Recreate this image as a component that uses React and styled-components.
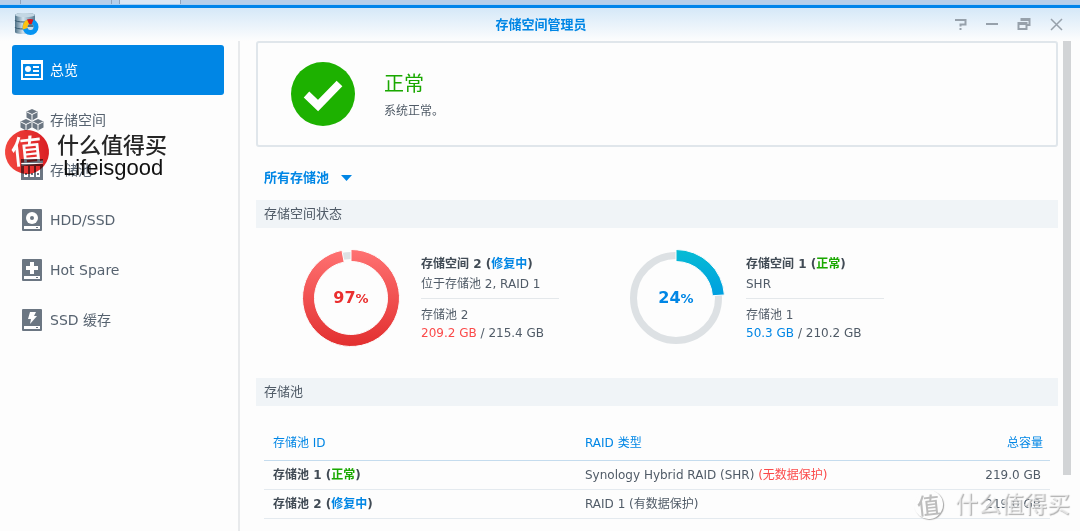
import React from "react";
import styled, { createGlobalStyle } from "styled-components";

const GlobalStyle = createGlobalStyle`
  * { box-sizing: border-box; }
  body {
    margin: 0;
    background: #fdfdfd;
    color: #505b67;
    font-family: "DejaVu Sans", "Noto Sans CJK SC", sans-serif;
    font-size: 12px;
    line-height: 18px;
  }
  button, select { font: inherit; color: inherit; }
`;

const tones = { ok: "#1aa800", busy: "#0086e5", danger: "#fb4a4a" };

const Page = styled.div`
  position: relative;
  display: flex;
  flex-direction: column;
  min-height: 100vh;
  overflow: hidden;
`;

const DesktopStrip = styled.div`
  display: flex;
  gap: 1px;
  height: 5px;
  background: #8fa3bd;
  border-bottom: 1px solid #a9cdf0;
`;

const DesktopTab = styled.span`
  width: ${(p) => p.$width || "auto"};
  flex: ${(p) => (p.$width ? "none" : 1)};
  background: ${(p) => (p.$light ? "#dbe7f5" : "#b7cfea")};
`;

const TitleBar = styled.header`
  display: grid;
  grid-template-columns: 1fr auto 1fr;
  align-items: center;
  height: 36px;
  padding: 0 16px 2px 14px;
  border-top: 3px solid #0084ea;
  background: linear-gradient(#d5e8f8, #fdfdfd);
`;

const WindowTitle = styled.h1`
  margin: 0;
  padding: 2px 0 0 4px;
  color: #0086e5;
  font-size: 13px;
  font-weight: 700;
`;

const WindowControls = styled.div`
  display: flex;
  justify-content: flex-end;
  gap: 16px;
`;

const ControlButton = styled.button`
  display: flex;
  padding: 0;
  border: 0;
  background: none;
  color: #97a1ab;
`;

const Body = styled.div`
  display: flex;
  flex: 1;
`;

const Sidebar = styled.nav`
  flex: none;
  width: 240px;
  padding: 4px 14px 0 12px;
  border-right: 2px solid #e8eaec;
`;

const NavItem = styled.a`
  display: flex;
  align-items: center;
  gap: 7px;
  height: 50px;
  padding-left: 9px;
  border-radius: 3px;
  font-size: 14px;
  text-decoration: none;
  color: ${(p) => (p.$active ? "#fff" : "#56626f")};
  background: ${(p) => (p.$active ? "#0086e5" : "transparent")};
`;

const Main = styled.main`
  flex: 1;
  min-width: 0;
  padding: 0 5px 12px 16px;
`;

const ScrollTrack = styled.div`
  flex: none;
  width: 17px;
`;

const ScrollThumb = styled.div`
  width: 8px;
  height: 434px;
  background: #d2d4d6;
`;

const StatusCard = styled.section`
  display: flex;
  align-items: center;
  gap: 29px;
  height: 106px;
  padding-left: 33px;
  border: 2px solid #e0e6eb;
  border-radius: 3px;
`;

const StatusTitle = styled.h2`
  margin: 0 0 3px;
  color: #1aa800;
  font-size: 20px;
  font-weight: 400;
  line-height: 30px;
`;

const StatusText = styled.p`
  margin: 0;
`;

const FilterRow = styled.div`
  display: flex;
  align-items: center;
  height: 53px;
  padding: 9px 0 0 8px;
`;

const FilterLabel = styled.label`
  display: flex;
  align-items: center;
  color: #0086e5;
`;

const PoolSelect = styled.select`
  appearance: none;
  width: 90px;
  margin-right: -13px;
  padding: 0;
  border: 0;
  background: none;
  color: #0086e5;
  font-size: 13px;
  font-weight: 700;
`;

const SectionBar = styled.h3`
  margin: 0;
  padding: 5px 8px;
  background: #f0f4f7;
  font-size: 13px;
  font-weight: 400;
`;

const Volumes = styled.div`
  display: flex;
  gap: 69px;
  padding: 21px 0 31px 47px;
`;

const Volume = styled.article`
  display: flex;
  gap: 22px;
`;

const Gauge = styled.div`
  display: grid;
  place-items: center;
  width: 96px;
  height: 98px;
  & > * { grid-area: 1 / 1; }
`;

const GaugeValue = styled.strong`
  color: ${(p) => p.$color};
  font-size: 16px;
  small { font-size: 13px; }
`;

const VolumeInfo = styled.div`
  width: 138px;
  padding-top: 6px;
  white-space: nowrap;
`;

const VolumeLine = styled.p`
  margin: 0;
`;

const VolumeName = styled.h4`
  margin: 0 0 2px;
  color: #414b55;
  font-size: 12px;
`;

const Divider = styled.hr`
  margin: 5px 0 7px;
  border: 0;
  border-top: 1px solid #e4e8eb;
`;

const Tone = styled.span`
  color: ${(p) => tones[p.$tone]};
`;

const TableWrap = styled.div`
  padding: 20px 8px 0;
`;

const PoolTable = styled.table`
  width: 100%;
  border-collapse: separate;
  border-spacing: 0;
  table-layout: fixed;
`;

const HeadCell = styled.th`
  height: 35px;
  width: ${(p) => p.$width};
  padding: 0 ${(p) => (p.$right ? "7px" : "9px")};
  border-bottom: 1px solid #c5dcee;
  color: #0086e5;
  font-weight: 400;
  text-align: ${(p) => (p.$right ? "right" : "left")};
`;

const Cell = styled.td`
  height: 29px;
  padding: 0 9px;
  border-bottom: 1px solid #e4eaef;
  color: ${(p) => (p.$bold ? "#414b55" : "inherit")};
  font-weight: ${(p) => (p.$bold ? 700 : 400)};
  text-align: ${(p) => (p.$right ? "right" : "left")};
  white-space: nowrap;
`;

const Brand = styled.div`
  position: absolute;
  left: 5px;
  top: 130px;
  display: flex;
  gap: 8px;
  mix-blend-mode: multiply;
  pointer-events: none;
`;

const BrandSeal = styled.span`
  display: grid;
  place-items: center;
  width: 44px;
  height: 44px;
  border-radius: 50%;
  background: linear-gradient(90deg, #f4473f, #dc1f24);
  color: #fff;
  font-size: 32px;
  font-weight: 500;
  line-height: 40px;
  transform: rotate(-6deg);
`;

const BrandWords = styled.div`
  padding-top: 5px;
  color: #262626;
  font-size: 22px;
  line-height: 22px;
  font-weight: 500;
`;

const BrandOwner = styled.div`
  padding-left: 6px;
  font-family: "Liberation Sans", sans-serif;
  font-weight: 400;
  color: #111;
`;

const CornerMark = styled.div`
  position: absolute;
  right: 10px;
  bottom: 11px;
  display: flex;
  align-items: center;
  gap: 12px;
  color: rgba(255, 255, 255, 0.6);
  font-size: 23px;
  font-weight: 500;
  line-height: 32px;
  text-shadow: 1px 1px 1px #b0b0b0;
  pointer-events: none;
`;

const CornerSeal = styled.span`
  display: grid;
  place-items: center;
  width: 29px;
  height: 29px;
  border-radius: 50%;
  background: #fdfdfd;
  box-shadow: 1px 1px 1px #a8a8a8;
  color: #bdbdbd;
  text-shadow: none;
  transform: rotate(-6deg);
`;

function AppIcon() {
  return (
    <svg width="25" height="24" viewBox="0 0 25 24" aria-hidden="true">
      <defs>
        <linearGradient id="metal">
          <stop offset="0" stopColor="#4f7288" />
          <stop offset=".4" stopColor="#d3e3ee" />
          <stop offset="1" stopColor="#567b93" />
        </linearGradient>
      </defs>
      <path d="M1 3q0-2 10-2t10 2v17q0 2-10 2t-10-2z" fill="url(#metal)" />
      <ellipse cx="11" cy="3" rx="10" ry="2" fill="#c3d7e4" />
      <path d="M1 8q0 2 10 2t10-2M1 15q0 2 10 2t10-2" stroke="#365a70" fill="none" />
      <circle cx="16.500" cy="15" r="5.500" fill="none" stroke="#0795f2" strokeWidth="5" />
      <path d="M16.500 15L9 17.500A8 8 0 0 1 13.500 7.600z" fill="#ffc20d" />
      <path d="M16.500 15L13 7.600A8 8 0 0 1 19.500 7.600z" fill="#df1717" />
      <circle cx="16.500" cy="15" r="3" fill="#c6dceb" />
      <path d="M13.500 15a3 3 0 0 1 6 0z" fill="#527488" />
    </svg>
  );
}

const drive = (
  <>
    <rect x="1" width="20" height="22" rx="1" />
    <rect x="3" y="17" width="16" height="3" fill="#fff" />
    <rect x="15" y="18" width="2" height="1" />
  </>
);

const iconShapes = {
  overview: (
    <>
      <path fillRule="evenodd" d="M0 1h22v20H0zM2 5v14h18V5z" />
      <circle cx="7" cy="10" r="3" />
      <path d="M12 7h6v2h-6zM12 11h6v2h-6zM4 15h14v2H4z" />
    </>
  ),
  volume: (
    <>
      {[[11, 0], [5, 10], [17, 10]].map(([x, y]) => (
        <g key={x} transform={`translate(${x} ${y})`}>
          <path d="M0 0l5.500 2.500v6L0 11.500l-5.500-3v-6z" />
          <path d="M-5 3l5 2.500L5 3M0 5.500v5.500" fill="none" stroke="#fff" />
        </g>
      ))}
    </>
  ),
  pool: (
    <>
      <path d="M0 0h22v4H0zM0 5h22v16H0z" />
      <path d="M3 7h4v11H3zM9 7h4v11H9zM15 7h4v11h-4z" fill="#fff" />
      <path d="M4 14h2v2H4zM10 14h2v2h-2zM16 14h2v2h-2z" />
    </>
  ),
  hdd: (
    <>
      {drive}
      <circle cx="11" cy="9" r="6" fill="#fff" />
      <circle cx="11" cy="9" r="2" />
    </>
  ),
  spare: (
    <>
      {drive}
      <path d="M9 3h4v4h4v4h-4v4H9v-4H5V7h4z" fill="#fff" />
    </>
  ),
  cache: (
    <>
      {drive}
      <path d="M9 3h6l-2 4h3l-7 8 1-5H7z" fill="#fff" />
    </>
  ),
};

function NavIcon({ name }) {
  return (
    <svg width="22" height="22" viewBox="0 0 22 22" overflow="visible" aria-hidden="true" fill={name === "overview" ? "#fff" : "#6b7682"}>
      {iconShapes[name]}
    </svg>
  );
}

const controls = [
  ["帮助", <path key="p" d="M3 4h10.500v4.500H8.500v2M8.500 12v2" strokeWidth="2" />],
  ["最小化", <path key="p" d="M2 8h12" />],
  ["还原", <path key="p" d="M2.500 7h8v6h-8zM2 8h9M5.500 5V3h8v6h-2M5 4h9" strokeWidth="2" />],
  ["关闭", <path key="p" d="M3 3l11 11M14 3L3 14" strokeWidth="1.500" />],
];

function polar(r, deg) {
  const a = ((deg - 90) * Math.PI) / 180;
  return `${48 + r * Math.cos(a)} ${48 + r * Math.sin(a)}`;
}

function Donut({ percent, from, to, id }) {
  const end = percent * 3.6;
  const large = end > 180 ? 1 : 0;
  const arc = `M${polar(48.5, 0)}A48.5 48.5 0 ${large} 1 ${polar(48.5, end)}L${polar(36.5, end)}A36.5 36.5 0 ${large} 0 ${polar(36.5, 0)}z`;
  return (
    <svg width="96" height="96" viewBox="0 0 96 96" overflow="visible" aria-hidden="true">
      <defs>
        <linearGradient id={id} x1="0" x2="0" y1="0" y2="1">
          <stop offset="0" stopColor={from} />
          <stop offset="1" stopColor={to} />
        </linearGradient>
      </defs>
      <circle cx="48" cy="48" r="42.500" fill="none" stroke="#dde1e4" strokeWidth="7" />
      <path d={arc} fill={`url(#${id})`} stroke="#fdfdfd" />
    </svg>
  );
}

const navItems = [
  ["overview", "总览"],
  ["volume", "存储空间"],
  ["pool", "存储池"],
  ["hdd", "HDD/SSD"],
  ["spare", "Hot Spare"],
  ["cache", "SSD 缓存"],
];

const volumes = [
  { id: 2, percent: 97, tone: "busy", state: "修复中", detail: "位于存储池 2, RAID 1", pool: "存储池 2", used: "209.2 GB", total: "215.4 GB", usedTone: "danger", value: "#ea2f2f", from: "#ff7272", to: "#e22f2f" },
  { id: 1, percent: 24, tone: "ok", state: "正常", detail: "SHR", pool: "存储池 1", used: "50.3 GB", total: "210.2 GB", usedTone: "busy", value: "#0086e5", from: "#06bcd4", to: "#009fe0" },
];

const pools = [
  { id: 1, tone: "ok", state: "正常", raid: "Synology Hybrid RAID (SHR) ", warning: "(无数据保护)", size: "219.0 GB" },
  { id: 2, tone: "busy", state: "修复中", raid: "RAID 1 (有数据保护)", size: "219.0 GB" },
];

export default function App() {
  return (
    <Page>
      <GlobalStyle />
      <DesktopStrip>
        <DesktopTab $width="20px" />
        <DesktopTab $width="90px" />
        <DesktopTab $width="7px" />
        <DesktopTab $width="60px" $light />
        <DesktopTab />
      </DesktopStrip>
      <TitleBar>
        <AppIcon />
        <WindowTitle>存储空间管理员</WindowTitle>
        <WindowControls>
          {controls.map(([label, shape]) => (
            <ControlButton key={label} type="button" aria-label={label}>
              <svg width="16" height="16" viewBox="0 0 16 16" fill="none" stroke="currentColor" strokeWidth="2">{shape}</svg>
            </ControlButton>
          ))}
        </WindowControls>
      </TitleBar>
      <Body>
        <Sidebar>
          {navItems.map(([icon, label], i) => (
            <NavItem key={icon} href={`#${icon}`} $active={i === 0}>
              <NavIcon name={icon} />
              {label}
            </NavItem>
          ))}
        </Sidebar>
        <Main>
          <StatusCard>
            <svg width="64" height="64" viewBox="0 0 64 64" aria-hidden="true">
              <circle cx="32" cy="32" r="32" fill="#1db100" />
              <path d="M15.500 32.500L27 43.500 48.500 21.500" fill="none" stroke="#fff" strokeWidth="8" />
            </svg>
            <div>
              <StatusTitle>正常</StatusTitle>
              <StatusText>系统正常。</StatusText>
            </div>
          </StatusCard>
          <FilterRow>
            <FilterLabel>
              <PoolSelect aria-label="存储池">
                <option>所有存储池</option>
              </PoolSelect>
              <svg width="11" height="6" viewBox="0 0 11 6" aria-hidden="true"><path d="M0 0h11L5.500 6z" fill="currentColor" /></svg>
            </FilterLabel>
          </FilterRow>
          <SectionBar>存储空间状态</SectionBar>
          <Volumes>
            {volumes.map((v) => (
              <Volume key={v.id}>
                <Gauge>
                  <Donut id={`ring${v.id}`} percent={v.percent} from={v.from} to={v.to} />
                  <GaugeValue $color={v.value}>{v.percent}<small>%</small></GaugeValue>
                </Gauge>
                <VolumeInfo>
                  <VolumeName>存储空间 {v.id} (<Tone $tone={v.tone}>{v.state}</Tone>)</VolumeName>
                  <VolumeLine>{v.detail}</VolumeLine>
                  <Divider />
                  <VolumeLine>{v.pool}</VolumeLine>
                  <VolumeLine><Tone $tone={v.usedTone}>{v.used}</Tone> / {v.total}</VolumeLine>
                </VolumeInfo>
              </Volume>
            ))}
          </Volumes>
          <SectionBar>存储池</SectionBar>
          <TableWrap>
            <PoolTable>
              <thead>
                <tr>
                  <HeadCell $width="312px">存储池 ID</HeadCell>
                  <HeadCell>RAID 类型</HeadCell>
                  <HeadCell $width="120px" $right>总容量</HeadCell>
                </tr>
              </thead>
              <tbody>
                {pools.map((p) => (
                  <tr key={p.id}>
                    <Cell $bold>存储池 {p.id} (<Tone $tone={p.tone}>{p.state}</Tone>)</Cell>
                    <Cell>{p.raid}{p.warning && <Tone $tone="danger">{p.warning}</Tone>}</Cell>
                    <Cell $right>{p.size}</Cell>
                  </tr>
                ))}
              </tbody>
            </PoolTable>
          </TableWrap>
        </Main>
        <ScrollTrack><ScrollThumb /></ScrollTrack>
      </Body>
      <Brand>
        <BrandSeal>值</BrandSeal>
        <BrandWords>
          什么值得买
          <BrandOwner>Lifeisgood</BrandOwner>
        </BrandWords>
      </Brand>
      <CornerMark>
        <CornerSeal>值</CornerSeal>
        什么值得买
      </CornerMark>
    </Page>
  );
}
